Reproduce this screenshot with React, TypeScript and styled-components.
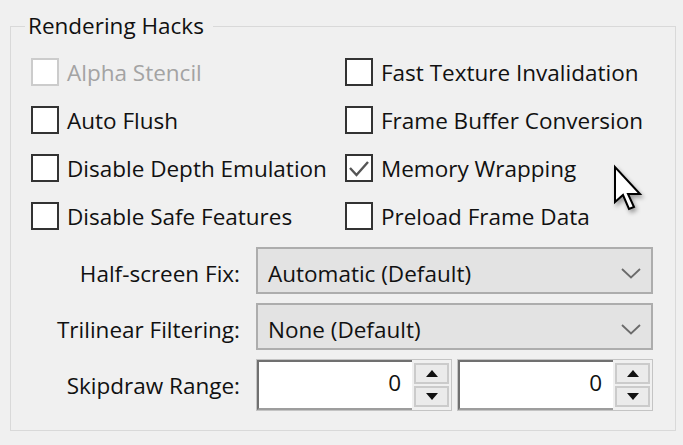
import React from 'react';
import styled, { createGlobalStyle } from 'styled-components';

type CheckItem = {
  label: string;
  checked?: boolean;
  disabled?: boolean;
};

const GlobalStyle = createGlobalStyle`
  html, body {
    margin: 0;
    padding: 0;
    background: #f0f0f0;
  }
  body {
    font-family: 'Open Sans', 'Noto Sans', 'Liberation Sans', sans-serif;
    -webkit-font-smoothing: antialiased;
  }
`;

const Page = styled.div`
  position: relative;
  width: 683px;
  height: 445px;
  padding: 11px 0 0 10px;
  box-sizing: border-box;
  background: #f0f0f0;
  overflow: hidden;
`;

const GroupBox = styled.fieldset`
  box-sizing: border-box;
  width: 666px;
  min-width: 0;
  margin: 0;
  padding: 17px 22px 19px 20px;
  border: 1px solid #d9d9d9;
`;

const Legend = styled.legend`
  margin-left: -6px;
  padding: 0 9px 0 3px;
  font-size: 22.5px;
  line-height: 30px;
  color: #111;
`;

const CheckGrid = styled.div`
  display: grid;
  grid-template-columns: 314px 1fr;
  grid-auto-rows: 28px;
  row-gap: 20px;
`;

const CheckRow = styled.label`
  display: flex;
  align-items: center;
  gap: 8px;
  font-size: 22.5px;
  white-space: nowrap;
  color: ${(p: { disabled?: boolean }) => (p.disabled ? '#a3a3a3' : '#111')};
`;

const Box = styled.span`
  box-sizing: border-box;
  width: 28px;
  height: 28px;
  flex: none;
  background: #fff;
  border: 2px solid ${(p: { disabled?: boolean }) => (p.disabled ? '#cccccc' : '#333')};
  display: flex;
  align-items: center;
  justify-content: center;
`;

const FormGrid = styled.div`
  margin-top: 17px;
  display: grid;
  grid-template-columns: 209px 1fr;
  grid-template-rows: 47px 47px 52px;
  column-gap: 16px;
  row-gap: 9px;
`;

const FieldLabel = styled.div`
  align-self: center;
  text-align: right;
  font-size: 22.5px;
  color: #111;
  white-space: nowrap;
  padding-top: ${(p: { shift?: number }) => p.shift || 0}px;
`;

const Combo = styled.div`
  box-sizing: border-box;
  display: flex;
  align-items: center;
  justify-content: space-between;
  padding: 6px 10px 0 10px;
  background: #e3e3e3;
  border: 2px solid #adadad;
  font-size: 22.5px;
  color: #111;
`;

const SpinPair = styled.div`
  display: flex;
  gap: 5px;
`;

const Spin = styled.div`
  flex: 1;
  display: flex;
  box-sizing: border-box;
  border: 1px solid #c4c4c4;
  background: #f0f0f0;
`;

const SpinInput = styled.div`
  flex: 1;
  display: flex;
  align-items: center;
  justify-content: flex-end;
  padding: 0 11px 6px 0;
  background: #fff;
  border-top: 2px solid #707070;
  border-left: 2px solid #707070;
  border-bottom: 2px solid #9d9d9d;
  font-size: 22.5px;
  color: #111;
`;

const SpinButtons = styled.div`
  display: flex;
  flex-direction: column;
  gap: 2px;
  padding: 3px 2px 3px 2px;
  width: 35px;
`;

const SpinButton = styled.div`
  flex: 1;
  box-sizing: border-box;
  display: flex;
  align-items: center;
  justify-content: center;
  background: #ebebeb;
  border: 2px solid #cbcbcb;
`;

const Cursor = styled.svg`
  position: absolute;
  left: 612px;
  top: 164px;
  filter: drop-shadow(2px 3px 2px rgba(0, 0, 0, 0.35));
`;

const items: CheckItem[] = [
  { label: 'Alpha Stencil', disabled: true },
  { label: 'Fast Texture Invalidation' },
  { label: 'Auto Flush' },
  { label: 'Frame Buffer Conversion' },
  { label: 'Disable Depth Emulation' },
  { label: 'Memory Wrapping', checked: true },
  { label: 'Disable Safe Features' },
  { label: 'Preload Frame Data' },
];

const Chevron = () => (
  <svg width="20" height="11" viewBox="0 0 20 11">
    <path d="M1 1 L10 9.5 L19 1" fill="none" stroke="#6b6b6b" strokeWidth="1.8" />
  </svg>
);

const Arrow = ({ up }: { up?: boolean }) => (
  <svg width="12" height="7" viewBox="0 0 12 7">
    <path d={up ? 'M0 7 L6 0 L12 7 Z' : 'M0 0 L12 0 L6 7 Z'} fill="#111" />
  </svg>
);

const SpinBox = ({ value }: { value: number }) => (
  <Spin>
    <SpinInput>{value}</SpinInput>
    <SpinButtons>
      <SpinButton>
        <Arrow up />
      </SpinButton>
      <SpinButton>
        <Arrow />
      </SpinButton>
    </SpinButtons>
  </Spin>
);

const App = () => {
  return (
    <Page>
      <GlobalStyle />
      <GroupBox>
        <Legend>Rendering Hacks</Legend>
        <CheckGrid>
          {items.map((item) => (
            <CheckRow key={item.label} disabled={item.disabled}>
              <Box disabled={item.disabled}>
                {item.checked && (
                  <svg width="24" height="24" viewBox="0 0 24 24">
                    <path d="M3 12 L9.5 19 L21 6" fill="none" stroke="#555" strokeWidth="2.4" />
                  </svg>
                )}
              </Box>
              {item.label}
            </CheckRow>
          ))}
        </CheckGrid>
        <FormGrid>
          <FieldLabel shift={6}>Half-screen Fix:</FieldLabel>
          <Combo>
            Automatic (Default)
            <Chevron />
          </Combo>
          <FieldLabel shift={6}>Trilinear Filtering:</FieldLabel>
          <Combo>
            None (Default)
            <Chevron />
          </Combo>
          <FieldLabel>Skipdraw Range:</FieldLabel>
          <SpinPair>
            <SpinBox value={0} />
            <SpinBox value={0} />
          </SpinPair>
        </FormGrid>
      </GroupBox>
      <Cursor width="34" height="50" viewBox="0 0 34 50">
        <path
          d="M3 3 L3 38 L11 31 L17 45 L22 43 L16 30 L28 30 Z"
          fill="#fff"
          stroke="#000"
          strokeWidth="2"
          strokeLinejoin="miter"
        />
      </Cursor>
    </Page>
  );
};

export default App;
